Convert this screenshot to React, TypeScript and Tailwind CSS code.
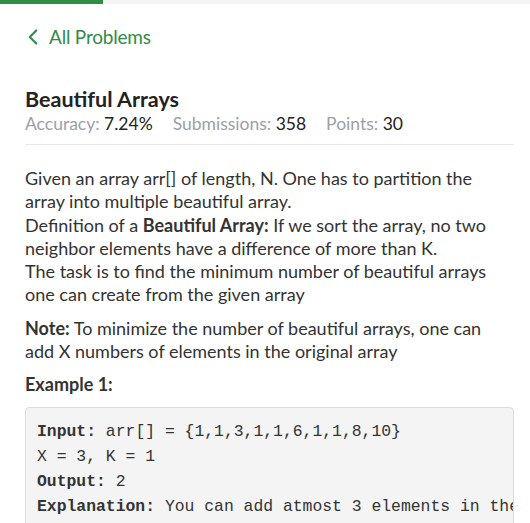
import { ChevronLeft } from "lucide-react";

export default function App() {
	return (
		<div className="w-[530px] h-[523px] overflow-hidden bg-white">
			{/* progress bar */}
			<div className="h-[4px] bg-[#f2f4f6]">
				<div className="h-full w-[103px] bg-[#2f8d46]" />
			</div>

			<div className="pl-[25px] pr-[16px]">
				<div className="flex items-center h-[28px] mt-[19px] text-[#2f8d46] font-['Lato',sans-serif]">
					<ChevronLeft className="w-[26px] h-[26px] -ml-[5px] mr-[3px]" strokeWidth={2} />
					<span className="text-[19px] tracking-[-0.2px]">All Problems</span>
				</div>

				<div className="mt-[35px] font-['Lato',sans-serif]">
					<h1 className="text-[21.5px] font-bold leading-[27px] text-[#222]">Beautiful Arrays</h1>
					<div className="flex gap-[20px] text-[17.5px] leading-[22px] text-[#9ba0a6]">
						<span>
							Accuracy: <span className="text-[#222]">7.24%</span>
						</span>
						<span>
							Submissions: <span className="text-[#222]">358</span>
						</span>
						<span>
							Points: <span className="text-[#222]">30</span>
						</span>
					</div>
				</div>

				<div className="mt-[9px] border-t border-[#e8e8e8]" />

				<div className="mt-[22px] font-['Lato',sans-serif] text-[18px] leading-[23.3px] text-[#333]">
					<p>
						Given an array arr[] of length, N. One has to partition the
						<br />
						array into multiple beautiful array.
						<br />
						Definition of a <b>Beautiful Array:</b> If we sort the array, no two
						<br />
						neighbor elements have a difference of more than K.
						<br />
						The task is to find the minimum number of beautiful arrays
						<br />
						one can create from the given array
					</p>
					<p className="mt-[10px]">
						<b>Note:</b> To minimize the number of beautiful arrays, one can
						<br />
						add X numbers of elements in the original array
					</p>
					<p className="mt-[10px] font-bold">Example 1:</p>
				</div>

				<div className="mt-[10px] rounded-[4px] border border-[#dcdcdc] bg-[#f4f4f4] pl-[11px] pt-[11px] pb-[10px] overflow-hidden whitespace-pre font-['Liberation_Mono',monospace] text-[16.4px] leading-[25px] text-[#333]">
					<div>
						<b>Input:</b> arr[] = {"{1,1,3,1,1,6,1,1,8,10}"}
					</div>
					<div>X = 3, K = 1</div>
					<div>
						<b>Output:</b> 2
					</div>
					<div>
						<b>Explanation:</b> You can add atmost 3 elements in the given array
					</div>
				</div>
			</div>
		</div>
	);
}
